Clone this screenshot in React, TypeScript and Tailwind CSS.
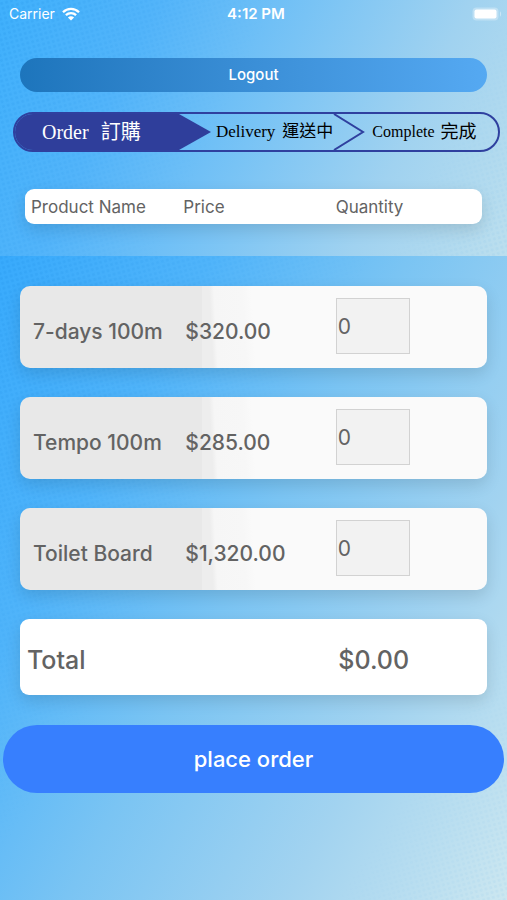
import React, { useState } from "react";

const products = [
  { id: "seven-days", name: "7-days 100m", price: 320 },
  { id: "tempo", name: "Tempo 100m", price: 285 },
  { id: "toilet-board", name: "Toilet Board", price: 1320 },
];

const formatPrice = (value: number) =>
  "$" + value.toLocaleString("en-US", { minimumFractionDigits: 2 });

// fine dots that fade out from a corner
const Halftone = ({ className }: { className: string }) => (
  <div className={`absolute inset-0 overflow-hidden ${className}`}>
    <div className="absolute -inset-40 rotate-[-15deg] bg-[radial-gradient(circle,#1685dd_1px,transparent_2px)] bg-[size:5px_5px]" />
  </div>
);

const Background = () => (
  <div className="absolute inset-0 -z-10 overflow-hidden" aria-hidden="true">
    <div className="absolute inset-x-0 top-0 h-64 overflow-hidden bg-[linear-gradient(115deg,#3fb0fc_0%,#52b4fa_25%,#78c3f5_50%,#a0d2f0_75%,#bcdfee_100%)]">
      <Halftone className="opacity-15 [mask-image:linear-gradient(115deg,black,transparent_45%)]" />
      <Halftone className="opacity-5 [mask-image:linear-gradient(295deg,black,transparent_20%)]" />
    </div>
    <div className="absolute inset-x-0 top-64 bottom-0 overflow-hidden bg-[linear-gradient(118deg,#38aafc_0%,#50b4fa_25%,#7ac4f3_48%,#a2d3f0_74%,#cce7f0_100%)]">
      <Halftone className="opacity-15 [mask-image:linear-gradient(122deg,black,transparent_42%)]" />
      <Halftone className="opacity-5 [mask-image:linear-gradient(302deg,black,transparent_20%)]" />
    </div>
  </div>
);

const StatusBar = () => (
  <div className="grid h-7 grid-cols-3 items-center pl-[9px] pr-1 text-sm text-white">
    <div className="flex items-center gap-[7px]">
      <span>Carrier</span>
      <svg width="18" height="14" viewBox="0 0 18 14" fill="none" aria-hidden="true">
        <path d="M1 5.2C5.5 .8 12.5 .8 17 5.2" stroke="white" strokeWidth="2.3" />
        <path d="M3.9 8.2C6.8 5.4 11.2 5.4 14.1 8.2" stroke="white" strokeWidth="2.3" />
        <path d="M9 13.6L5.9 10.5C7.6 8.9 10.4 8.9 12.1 10.5Z" fill="white" />
      </svg>
    </div>
    <span className="text-center text-[15px] font-semibold">4:12 PM</span>
    <svg className="justify-self-end" width="31" height="14" viewBox="0 0 31 14" aria-hidden="true">
      <rect x=".5" y=".5" width="26" height="13" rx="4" fill="white" fillOpacity=".3" />
      <rect x="2.5" y="2.5" width="22" height="9" rx="2" fill="white" />
      <path d="M28 4.5v5c1.5-.6 1.5-4.4 0-5Z" fill="white" fillOpacity=".4" />
    </svg>
  </div>
);

const Steps = () => (
  <ol className="ml-[13px] mr-[7px] mt-5 flex h-10 items-stretch overflow-hidden rounded-full border-2 border-[#2f409f] font-['Liberation_Serif','Noto_Sans_CJK_TC',serif] text-base text-black">
    <li className="flex flex-[198] text-xl text-white" aria-current="step">
      <span className="flex flex-1 items-center gap-3 whitespace-nowrap bg-[#2f3e9b] pl-[27px]">
        <span>Order</span>
        <span>訂購</span>
      </span>
      <svg width="32" height="36" viewBox="0 0 32 36" aria-hidden="true">
        <path d="M0 0L32 18L0 36Z" fill="#2f3e9b" />
      </svg>
    </li>
    <li className="flex flex-[146] items-center pl-[5px]">
      <span className="flex flex-1 items-center gap-[7px] whitespace-nowrap text-[17px]">
        <span>Delivery</span>
        <span>運送中</span>
      </span>
      <svg width="32" height="36" viewBox="0 0 32 36" fill="none" aria-hidden="true">
        <path d="M1 0L30 18L1 36" stroke="#2f409f" strokeWidth="2" />
      </svg>
    </li>
    <li className="flex flex-[127] items-center gap-[6px] whitespace-nowrap pl-[7px]">
      <span>Complete</span>
      <span className="text-lg">完成</span>
    </li>
  </ol>
);

const App = () => {
  const [quantities, setQuantities] = useState<Record<string, string>>({});

  const total = products.reduce(
    (sum, product) => sum + product.price * (Number(quantities[product.id]) || 0),
    0
  );

  return (
    <div className="relative isolate min-h-screen font-[Inter,sans-serif] text-[#636363]">
      <Background />
      <StatusBar />
      <div className="px-5 pt-[30px]">
        <button
          type="button"
          className="h-[34px] w-full rounded-full bg-linear-to-r from-[#1d75bc] to-[#55a9f2] text-[15px] font-medium text-white"
        >
          Logout
        </button>
      </div>
      <Steps />

      <table className="mt-[37px] block">
        <thead className="block px-[25px]">
          <tr className="grid h-[35px] grid-cols-3 items-center rounded-[9px] bg-white pt-[2px] text-[17px] shadow-[0_6px_16px_rgba(0,0,0,0.12)]">
            <th className="pl-[6px] text-left font-normal">Product Name</th>
            <th className="pl-[6px] text-left font-normal">Price</th>
            <th className="pl-[6px] text-left font-normal">Quantity</th>
          </tr>
        </thead>

        <tbody className="flex flex-col gap-[29px] px-5 pt-[62px]">
          {products.map((product) => (
            <tr
              key={product.id}
              className="grid h-[82px] grid-cols-3 items-center rounded-[10px] bg-[linear-gradient(90deg,#e8e8e8_39%,transparent_39%),linear-gradient(87deg,#ededed_41%,#f6f6f6_42%,#f7f7f7_48%,#fafafa_50%)] px-[5px] text-[21px] font-medium shadow-[0_6px_16px_rgba(0,0,0,0.12)]"
            >
              <td className="whitespace-nowrap pl-2 pt-[10px]">
                <label htmlFor={product.id}>{product.name}</label>
              </td>
              <td className="pl-2 pt-[10px]">{formatPrice(product.price)}</td>
              <td className="pb-[2px] pl-[6px]">
                <input
                  id={product.id}
                  type="text"
                  inputMode="numeric"
                  value={quantities[product.id] ?? "0"}
                  onChange={(e) =>
                    setQuantities({ ...quantities, [product.id]: e.target.value })
                  }
                  className="block h-14 w-[74px] border border-[#d2d2d2] bg-[#f2f2f2] pl-px text-[21px] font-normal outline-none"
                />
              </td>
            </tr>
          ))}
        </tbody>

        <tfoot className="block px-5 pt-[29px]">
          <tr className="grid h-[76px] grid-cols-3 items-center rounded-[9px] bg-white pt-2 text-[25px] font-medium shadow-[0_6px_16px_rgba(0,0,0,0.12)]">
            <th className="col-span-2 pl-[7px] text-left font-medium">Total</th>
            <td className="pl-[7px]">{formatPrice(total)}</td>
          </tr>
        </tfoot>
      </table>

      <div className="px-[3px] pt-[30px]">
        <button
          type="button"
          className="h-[68px] w-full rounded-full bg-[#377ffe] text-[22px] font-medium text-white"
        >
          place order
        </button>
      </div>
    </div>
  );
};

export default App;
